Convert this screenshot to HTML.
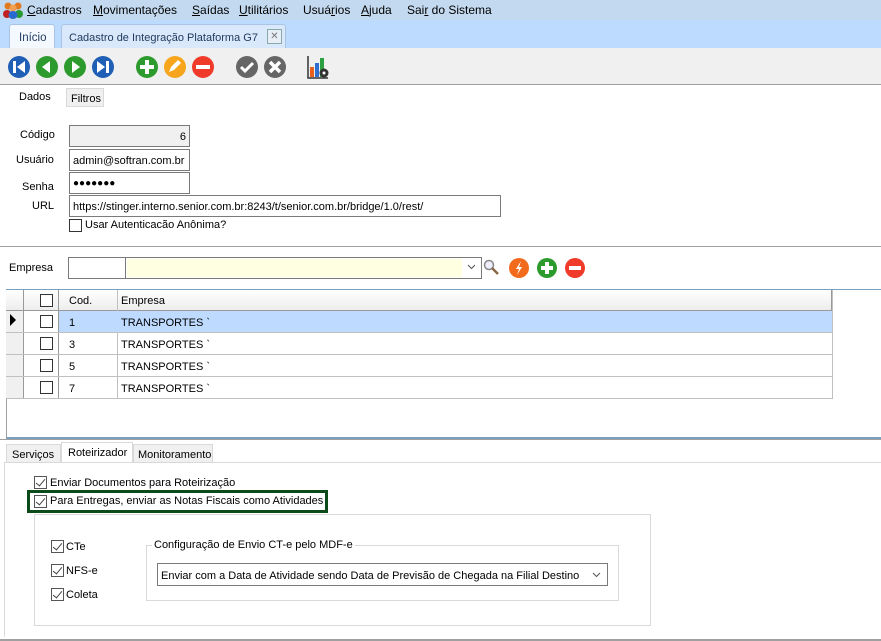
<!DOCTYPE html>
<html><head><meta charset="utf-8"><style>
*{margin:0;padding:0;box-sizing:border-box}
body{width:881px;height:641px;overflow:hidden;background:#fff;font-family:"Liberation Sans",Arial,sans-serif;font-size:11px;color:#000;position:relative}
.a{position:absolute}
.menu{left:0;top:0;width:881px;height:20px;background:#c3d9ef;font-size:12px}
.menu span{position:absolute;top:3px}
.tabbar{left:0;top:20px;width:881px;height:28px;background:#bddbff}
.tool{left:0;top:48px;width:881px;height:37px;background:#f0f0f0;border-bottom:1px solid #a0a0a0}
.in{position:absolute;border:1px solid #7a7a7a;background:#fff;height:22px;padding:4px 3px;font-size:11px;white-space:nowrap;overflow:hidden}
.lbl{position:absolute;font-size:11px;white-space:nowrap}
.cb{position:absolute;width:13px;height:13px;border:1px solid #333;background:#fff}
.ck{position:absolute;width:13px;height:13px;border:1px solid #555;background:#fff}
.ck:after{content:"";position:absolute;left:3px;top:0px;width:4px;height:8px;border:solid #444;border-width:0 1.3px 1.3px 0;transform:rotate(40deg)}
</style></head><body>
<div class="a menu">
<svg class="a" style="left:3px;top:1px" width="20" height="18" viewBox="0 0 20 18"><circle cx="5" cy="5" r="3.5" fill="#e07a20"/><circle cx="15" cy="5" r="3.5" fill="#e07a20"/><circle cx="10" cy="7" r="3.5" fill="#f0a050"/><ellipse cx="4" cy="13" rx="4" ry="4" fill="#c02020"/><ellipse cx="16" cy="13" rx="4" ry="4" fill="#2a9a30"/><ellipse cx="10" cy="14" rx="4.5" ry="4" fill="#2a6ad0"/></svg>
<span style="left:27px"><u>C</u>adastros</span>
<span style="left:93px"><u>M</u>ovimentações</span>
<span style="left:192px"><u>S</u>aídas</span>
<span style="left:239px"><u>U</u>tilitários</span>
<span style="left:303px">Usuá<u>r</u>ios</span>
<span style="left:361px"><u>A</u>juda</span>
<span style="left:407px">Sai<u>r</u> do Sistema</span>
</div>
<div class="a tabbar">
<div class="a" style="left:9px;top:4px;width:46px;height:24px;background:#f4f8ff;border:1px solid #a9c4e4;border-bottom:none;border-radius:3px 3px 0 0;font-size:11.5px;color:#1e395b;padding:7px 0 0 9px">Início</div>
<div class="a" style="left:61px;top:4px;width:225px;height:24px;background:#d9e8fb;border:1px solid #a9c4e4;border-bottom:none;border-radius:3px 3px 0 0;font-size:11px;color:#1e395b;padding:7px 0 0 7px;white-space:nowrap">Cadastro de Integração Plataforma G7</div>
<div class="a" style="left:267px;top:9px;width:15px;height:15px;border:1px solid #8aa;background:#e8eef6;font-size:10px;color:#777;text-align:center;line-height:13px">✕</div>
</div>
<div class="a tool">
<svg class="a" style="left:0;top:0" width="340" height="37">
<g fill="#1f5fb5"><circle cx="19" cy="19" r="11"/><circle cx="103" cy="19" r="11"/></g>
<g fill="#2d9a2d"><circle cx="47" cy="19" r="11"/><circle cx="75" cy="19" r="11"/><circle cx="147" cy="19" r="11"/></g>
<circle cx="175" cy="19" r="11" fill="#f7a51c"/><circle cx="203" cy="19" r="11" fill="#f03a2a"/>
<g fill="#666"><circle cx="247" cy="19" r="11"/><circle cx="275" cy="19" r="11"/></g>
<g fill="#fff"><rect x="13" y="13" width="3" height="12"/><path d="M25 13v12l-8-6z"/><path d="M50 13v12l-8-6z"/><path d="M72 13v12l8-6z"/><path d="M97 13v12l8-6z"/><rect x="106" y="13" width="3" height="12"/>
<rect x="140" y="17" width="14" height="4"/><rect x="145" y="12" width="4" height="14"/><rect x="196" y="17" width="14" height="4"/>
<path d="M169 24l2-5 7-7 3 3-7 7z"/></g>
<path d="M241 19l4 4 8-8" stroke="#fff" stroke-width="3" fill="none"/>
<path d="M270 14l10 10M280 14l-10 10" stroke="#fff" stroke-width="3.5"/>
<path d="M308 8v22h20" stroke="#333" stroke-width="1.5" fill="none"/>
<rect x="310" y="19" width="4" height="10" fill="#e8601c"/><rect x="315" y="15" width="4" height="14" fill="#2f6fd0"/><rect x="320" y="10" width="4" height="19" fill="#2aa040"/>
<circle cx="324" cy="25" r="4.5" fill="#333"/><circle cx="324" cy="25" r="1.5" fill="#fff"/>
</svg>
</div>
<div class="a" style="left:6px;top:86px;width:60px;height:22px;background:#fff;font-size:11px;padding:5px 0 0 13px">Dados</div>
<div class="a" style="left:66px;top:88px;width:38px;height:19px;background:#f0f0f0;border:1px solid #d9d9d9;font-size:11px;padding:4px 0 0 4px">Filtros</div>

<div class="lbl" style="left:20px;top:129px">Código</div>
<div class="in" style="left:69px;top:125px;width:121px;background:#f0f0f0;text-align:right;padding-top:5px">6</div>
<div class="lbl" style="left:16px;top:154px">Usuário</div>
<div class="in" style="left:69px;top:149px;width:121px;padding-top:5px">admin@softran.com.br</div>
<div class="lbl" style="left:22px;top:181px">Senha</div>
<div class="in" style="left:69px;top:172px;width:121px;font-size:10px;padding-top:5px">●●●●●●●</div>
<div class="lbl" style="left:32px;top:200px">URL</div>
<div class="in" style="left:69px;top:195px;width:432px;padding-top:5px">https://stinger.interno.senior.com.br:8243/t/senior.com.br/bridge/1.0/rest/</div>
<div class="cb" style="left:69px;top:219px"></div>
<div class="lbl" style="left:85px;top:219px">Usar Autenticacão Anônima?</div>
<div class="a" style="left:0;top:246px;width:881px;height:1px;background:#a0a0a0"></div>

<div class="lbl" style="left:9px;top:262px">Empresa</div>
<div class="in" style="left:68px;top:257px;width:58px"></div>
<div class="a" style="left:125px;top:257px;width:357px;height:22px;border:1px solid #7a7a7a;background:#fff"></div>
<div class="a" style="left:127px;top:259px;width:335px;height:18px;background:#ffffe1"></div>
<svg class="a" style="left:467px;top:264px" width="9" height="6"><path d="M1 1l3.5 3.5L8 1" stroke="#555" fill="none"/></svg>
<svg class="a" style="left:482px;top:258px" width="18" height="18"><circle cx="7" cy="7" r="4.5" stroke="#888" stroke-width="1.5" fill="#eef"/><path d="M10 10l6 6" stroke="#864" stroke-width="2.5"/></svg>
<svg class="a" style="left:508px;top:256px" width="82" height="24">
<circle cx="11" cy="12" r="10" fill="#f26b1d"/><path d="M13 5l-5 8h3l-2 6 5-8h-3z" fill="#fff"/>
<circle cx="39" cy="12" r="10" fill="#2d9a2d"/><rect x="33" y="10" width="12" height="4" fill="#fff"/><rect x="37" y="6" width="4" height="12" fill="#fff"/>
<circle cx="67" cy="12" r="10" fill="#f03a2a"/><rect x="61" y="10" width="12" height="4" fill="#fff"/>
</svg>

<div class="a" style="left:6px;top:289px;width:875px;height:150px;border-top:1px solid #7aa0c0;border-left:1px solid #a0a0a0;border-bottom:2px solid #7aa0c0;background:#fff"></div>
<div class="a" style="left:6px;top:290px;width:826px;height:21px;background:linear-gradient(#fff,#ededed);border-bottom:1px solid #999;border-right:1px solid #999"></div>
<div class="a" style="left:6px;top:311px;width:17px;height:88px;background:#f0f0f0"></div>
<div class="a" style="left:23px;top:290px;width:1px;height:109px;background:#999"></div>
<div class="a" style="left:58px;top:290px;width:1px;height:109px;background:#999"></div>
<div class="cb" style="left:40px;top:294px"></div>
<div class="lbl" style="left:69px;top:295px">Cod.</div>
<div class="a" style="left:117px;top:290px;width:1px;height:109px;background:#c0c0c0"></div>
<div class="lbl" style="left:121px;top:295px">Empresa</div>
<div class="a" style="left:59px;top:311px;width:773px;height:22px;background:#bedbff"></div>
<div class="a" style="left:10px;top:314px;width:0;height:0;border-top:6px solid transparent;border-bottom:6px solid transparent;border-left:6px solid #000"></div>
<div class="a" style="left:6px;top:332px;width:826px;height:1px;background:#c0c0c0"></div>
<div class="a" style="left:6px;top:354px;width:826px;height:1px;background:#c0c0c0"></div>
<div class="a" style="left:6px;top:376px;width:826px;height:1px;background:#c0c0c0"></div>
<div class="a" style="left:6px;top:398px;width:826px;height:1px;background:#c0c0c0"></div>
<div class="a" style="left:832px;top:290px;width:1px;height:109px;background:#c0c0c0"></div>
<div class="cb" style="left:40px;top:315px"></div><div class="lbl" style="left:69px;top:317px">1</div><div class="lbl" style="left:121px;top:317px">TRANSPORTES `</div>
<div class="cb" style="left:40px;top:337px"></div><div class="lbl" style="left:69px;top:339px">3</div><div class="lbl" style="left:121px;top:339px">TRANSPORTES `</div>
<div class="cb" style="left:40px;top:359px"></div><div class="lbl" style="left:69px;top:361px">5</div><div class="lbl" style="left:121px;top:361px">TRANSPORTES `</div>
<div class="cb" style="left:40px;top:381px"></div><div class="lbl" style="left:69px;top:383px">7</div><div class="lbl" style="left:121px;top:383px">TRANSPORTES `</div>

<div class="a" style="left:0;top:439px;width:881px;height:1px;background:#a0a0a0"></div>
<div class="a" style="left:6px;top:444px;width:55px;height:19px;background:#f0f0f0;border:1px solid #d9d9d9;padding:4px 0 0 5px;font-size:11px">Serviços</div>
<div class="a" style="left:61px;top:442px;width:72px;height:21px;background:#fff;border:1px solid #d9d9d9;border-bottom:none;padding:4px 0 0 6px;font-size:11px">Roteirizador</div>
<div class="a" style="left:133px;top:444px;width:80px;height:19px;background:#f0f0f0;border:1px solid #d9d9d9;padding:4px 0 0 4px;font-size:11px;white-space:nowrap">Monitoramento</div>
<div class="a" style="left:4px;top:462px;width:877px;height:175px;border:1px solid #d9d9d9;border-right:none;border-bottom:none"></div>
<div class="a" style="left:0;top:639px;width:881px;height:2px;background:#a0a0a0"></div>
<div class="ck" style="left:34px;top:476px"></div>
<div class="lbl" style="left:50px;top:477px">Enviar Documentos para Roteirização</div>
<div class="a" style="left:27px;top:490px;width:301px;height:23px;border:3px solid #0d4a1a"></div>
<div class="ck" style="left:34px;top:495px"></div>
<div class="lbl" style="left:50px;top:495px">Para Entregas, enviar as Notas Fiscais como Atividades</div>
<div class="a" style="left:34px;top:514px;width:617px;height:112px;border:1px solid #d9d9d9"></div>
<div class="ck" style="left:51px;top:540px"></div><div class="lbl" style="left:66px;top:541px">CTe</div>
<div class="ck" style="left:51px;top:564px"></div><div class="lbl" style="left:66px;top:565px">NFS-e</div>
<div class="ck" style="left:51px;top:588px"></div><div class="lbl" style="left:66px;top:589px">Coleta</div>
<div class="a" style="left:146px;top:545px;width:473px;height:56px;border:1px solid #d9d9d9"></div>
<div class="lbl" style="left:152px;top:539px;background:#fff;padding:0 2px">Configuração de Envio CT-e pelo MDF-e</div>
<div class="in" style="left:157px;top:563px;width:451px;height:23px;padding-top:6px">Enviar com a Data de Atividade sendo Data de Previsão de Chegada na Filial Destino</div>
<div class="a" style="left:589px;top:566px;width:18px;height:18px;background:#fff"></div>
<svg class="a" style="left:592px;top:572px" width="9" height="6"><path d="M1 1l3.5 3.5L8 1" stroke="#555" fill="none"/></svg>
</body></html>
